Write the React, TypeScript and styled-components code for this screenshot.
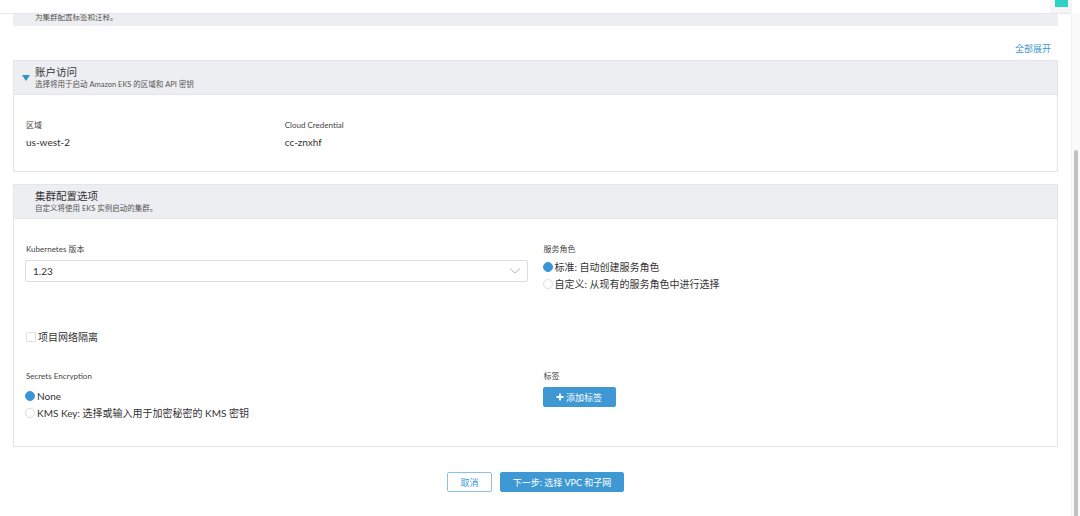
import styled, { createGlobalStyle } from 'styled-components';

const GlobalStyle = createGlobalStyle`
  html, body {
    margin: 0;
    padding: 0;
    background: #ffffff;
    font-family: Lato, "Noto Sans CJK SC", sans-serif;
    color: #333333;
  }
  * { box-sizing: border-box; }
`;

const Page = styled.div`
  display: flex;
  width: 1080px;
  height: 516px;
  overflow: hidden;
`;

const Main = styled.div`
  flex: 1;
  display: flex;
  flex-direction: column;
`;

const TopBar = styled.div`
  height: 14px;
  border-bottom: 1px solid #e6e7ec;
  display: flex;
  justify-content: flex-end;
`;

const Badge = styled.div`
  width: 22px;
  height: 13px;
  background: #f4f5f7;
  display: flex;
  justify-content: center;
  margin-right: -1px;
`;

const BadgeSquare = styled.div`
  width: 13px;
  height: 7px;
  background: #2bd3c5;
`;

const Content = styled.div`
  padding: 0 13px;
  display: flex;
  flex-direction: column;
`;

const CutHeader = styled.div`
  height: 12px;
  background: #edeef2;
  padding-left: 22px;
  font-size: 7.5px;
  line-height: 8px;
  color: #555;
  overflow: hidden;
`;

const ExpandRow = styled.div`
  display: flex;
  justify-content: flex-end;
  padding: 16px 7px 0 0;
  height: 34px;
`;

const Link = styled.a`
  font-size: 9px;
  line-height: 14px;
  color: #3d98d3;
  cursor: pointer;
`;

const Section = styled.section<{ $gap?: number }>`
  border: 1px solid #e4e5ea;
  margin-top: ${(p) => p.$gap ?? 0}px;
`;

const SectionHeader = styled.div`
  height: 34px;
  background: #edeef2;
  border-bottom: 1px solid #e4e5ea;
  display: flex;
  align-items: flex-start;
  padding: 4px 0 0 8px;
  gap: 5px;
`;

const Caret = styled.div<{ $hidden?: boolean }>`
  width: 0;
  height: 0;
  margin-top: 10px;
  border-left: 4px solid transparent;
  border-right: 4px solid transparent;
  border-top: 6px solid #2f8ed2;
  visibility: ${(p) => (p.$hidden ? 'hidden' : 'visible')};
`;

const HeaderText = styled.div`
  display: flex;
  flex-direction: column;
`;

const Title = styled.div`
  font-size: 10.5px;
  line-height: 14px;
  color: #333;
`;

const Subtitle = styled.div`
  font-size: 7.5px;
  line-height: 11px;
  color: #555;
`;

const Body = styled.div<{ $pad: string }>`
  padding: ${(p) => p.$pad};
`;

const InfoGrid = styled.div`
  display: grid;
  grid-template-columns: repeat(4, 1fr);
  column-gap: 16px;
`;

const Label = styled.div`
  font-size: 8px;
  line-height: 12px;
  color: #444;
`;

const Value = styled.div`
  font-size: 10px;
  line-height: 14px;
  color: #333;
  margin-top: 4px;
`;

const TwoCols = styled.div<{ $mt?: number }>`
  display: grid;
  grid-template-columns: 1fr 1fr;
  column-gap: 16px;
  margin-top: ${(p) => p.$mt ?? 0}px;
`;

const Field = styled.div`
  display: flex;
  flex-direction: column;
`;

const Select = styled.div`
  margin-top: 5px;
  height: 22px;
  border: 1px solid #dcdde3;
  border-radius: 2px;
  display: flex;
  align-items: center;
  justify-content: space-between;
  padding: 0 6px 0 7px;
  font-size: 10px;
  color: #333;
  margin-left: -1px;
`;

const RadioList = styled.div<{ $mt: number }>`
  display: flex;
  flex-direction: column;
  gap: 3px;
  margin-top: ${(p) => p.$mt}px;
`;

const RadioRow = styled.label`
  display: flex;
  align-items: center;
  font-size: 10px;
  line-height: 14px;
  color: #333;
  margin-left: -1px;
`;

const RadioDot = styled.span<{ $checked?: boolean }>`
  width: 10px;
  height: 10px;
  border-radius: 50%;
  margin-right: 2px;
  background: ${(p) => (p.$checked ? '#3994d8' : '#ffffff')};
  border: 1px solid ${(p) => (p.$checked ? '#3994d8' : '#dcdde2')};
`;

const CheckRow = styled.label`
  display: flex;
  align-items: center;
  gap: 2px;
  margin-top: 39px;
  font-size: 10px;
  line-height: 14px;
  color: #333;
`;

const CheckBox = styled.span`
  width: 10px;
  height: 10px;
  border: 1px solid #dfe0e5;
  border-radius: 1px;
  background: #fff;
`;

const Button = styled.button<{ $outline?: boolean }>`
  height: 20px;
  padding: 0 11px;
  border-radius: 2px;
  font-family: inherit;
  font-size: 9px;
  display: inline-flex;
  align-items: center;
  justify-content: center;
  gap: 2px;
  cursor: pointer;
  border: 1px solid ${(p) => (p.$outline ? '#8fc0e3' : '#3d98d3')};
  background: ${(p) => (p.$outline ? '#ffffff' : '#3d98d3')};
  color: ${(p) => (p.$outline ? '#3d98d3' : '#ffffff')};
`;

const TagButton = styled(Button)`
  margin-top: 5px;
  margin-left: -1px;
  align-self: flex-start;
  width: 73px;
`;

const Footer = styled.div`
  display: flex;
  justify-content: center;
  gap: 8px;
  margin-top: 25px;
`;

const ScrollTrack = styled.div`
  width: 9px;
  border-left: 1px solid #f0f0f0;
  background: #fafafa;
  padding: 136px 2px 0 2px;
  margin-top: 14px;
`;

const Thumb = styled.div`
  height: 380px;
  background: #c2c2c2;
  border-radius: 2px;
`;

function Radio({ checked, children }: { checked?: boolean; children: React.ReactNode }) {
  return (
    <RadioRow>
      <RadioDot $checked={checked} />
      {children}
    </RadioRow>
  );
}

export default function App() {
  return (
    <>
      <GlobalStyle />
      <Page>
        <Main>
          <TopBar>
            <Badge>
              <BadgeSquare />
            </Badge>
          </TopBar>
          <Content>
            <CutHeader>为集群配置标签和注释。</CutHeader>
            <ExpandRow>
              <Link>全部展开</Link>
            </ExpandRow>

            <Section>
              <SectionHeader>
                <Caret />
                <HeaderText>
                  <Title>账户访问</Title>
                  <Subtitle>选择将用于启动 Amazon EKS 的区域和 API 密钥</Subtitle>
                </HeaderText>
              </SectionHeader>
              <Body $pad="24px 12px 22px 12px">
                <InfoGrid>
                  <Field>
                    <Label>区域</Label>
                    <Value>us-west-2</Value>
                  </Field>
                  <Field>
                    <Label>Cloud Credential</Label>
                    <Value>cc-znxhf</Value>
                  </Field>
                </InfoGrid>
              </Body>
            </Section>

            <Section $gap={12}>
              <SectionHeader>
                <Caret $hidden />
                <HeaderText>
                  <Title>集群配置选项</Title>
                  <Subtitle>自定义将使用 EKS 实例启动的集群。</Subtitle>
                </HeaderText>
              </SectionHeader>
              <Body $pad="24px 12px 26px 12px">
                <TwoCols>
                  <Field>
                    <Label>Kubernetes 版本</Label>
                    <Select>
                      1.23
                      <svg width="12" height="8" viewBox="0 0 12 8">
                        <path d="M1 1.5 L6 6 L11 1.5" fill="none" stroke="#b5b7bf" strokeWidth="1" />
                      </svg>
                    </Select>
                  </Field>
                  <Field>
                    <Label>服务角色</Label>
                    <RadioList $mt={5}>
                      <Radio checked>标准: 自动创建服务角色</Radio>
                      <Radio>自定义: 从现有的服务角色中进行选择</Radio>
                    </RadioList>
                  </Field>
                </TwoCols>

                <CheckRow>
                  <CheckBox />
                  项目网络隔离
                </CheckRow>

                <TwoCols $mt={26}>
                  <Field>
                    <Label>Secrets Encryption</Label>
                    <RadioList $mt={7}>
                      <Radio checked>None</Radio>
                      <Radio>KMS Key: 选择或输入用于加密秘密的 KMS 密钥</Radio>
                    </RadioList>
                  </Field>
                  <Field>
                    <Label>标签</Label>
                    <TagButton>
                      <svg width="8" height="8" viewBox="0 0 8 8">
                        <path d="M4 0.5 V7.5 M0.5 4 H7.5" stroke="#fff" strokeWidth="1.8" />
                      </svg>
                      添加标签
                    </TagButton>
                  </Field>
                </TwoCols>
              </Body>
            </Section>

            <Footer>
              <Button $outline style={{ width: 45 }}>取消</Button>
              <Button style={{ width: 124 }}>下一步: 选择 VPC 和子网</Button>
            </Footer>
          </Content>
        </Main>
        <ScrollTrack>
          <Thumb />
        </ScrollTrack>
      </Page>
    </>
  );
}
